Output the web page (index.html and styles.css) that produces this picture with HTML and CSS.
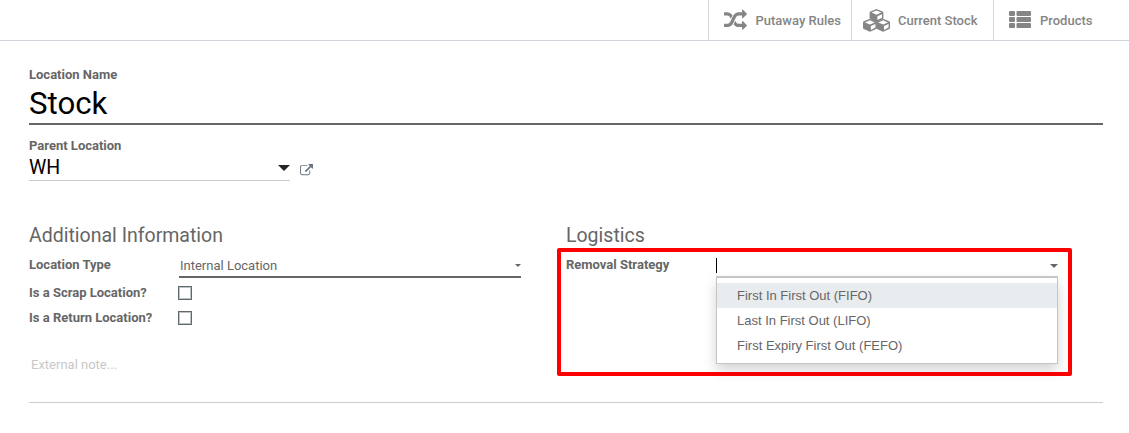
FILE: index.html
```html
<!DOCTYPE html>
<html lang="en">
<head>
<meta charset="utf-8">
<title>Stock location</title>
<link rel="stylesheet" href="styles.css">
</head>
<body>
<nav class="stat-bar">
  <a class="stat stat-putaway">
    <svg class="icon-random" viewBox="0 0 1792 1792"><path d="M666 481q-60 92-137 273-22-45-37-72.500t-40.500-63.500-51-56.500-63-35-81.500-14.500h-224q-14 0-23-9t-9-23v-192q0-14 9-23t23-9h224q250 0 410 225zm1126 799q0 14-9 23l-320 320q-9 9-23 9-13 0-22.500-9.500t-9.500-22.500v-192q-32 0-85 .5t-81 1-73-1-71-5-64-10.500-63-18.500-58-28.500-59-40-55-53.500-56-69.500q59-93 136-273 22 45 37 72.500t40.500 63.500 51 56.500 63 35 81.500 14.500h256v-192q0-14 9-23t23-9q12 0 24 10l319 319q9 9 9 23zm0-896q0 14-9 23l-320 320q-9 9-23 9-13 0-22.500-9.500t-9.500-22.500v-192h-256q-48 0-87 15t-69 45-51 61.500-45 77.500q-32 62-78 171-29 66-49.500 111t-54 105-64 100-74 83-90 68.500-106.500 42-128 16.500h-224q-14 0-23-9t-9-23v-192q0-14 9-23t23-9h224q48 0 87-15t69-45 51-61.500 45-77.500q32-62 78-171 29-66 49.500-111t54-105 64-100 74-83 90-68.500 106.500-42 128-16.500h256v-192q0-14 9-23t23-9q12 0 24 10l319 319q9 9 9 23z"/></svg>
    <span>Putaway Rules</span>
  </a>
  <a class="stat stat-stock">
    <svg class="icon-cubes" viewBox="0 0 27 23">
      <defs>
        <g id="cube">
          <path d="M-.6-6.100Q0-6.300.6-6.100L6.100-3.800Q6.900-3.400 6.900-2.600V2.600Q6.900 3.400 6.200 3.800L.7 6.500Q0 6.800-.7 6.500L-6.200 3.800Q-6.900 3.400-6.900 2.600V-2.600Q-6.900-3.400-6.100-3.800Z"/>
          <path class="cube-face" d="M0-4.800 4.900-2.700 0-.6-4.900-2.700ZM.9.900 5.500-1.100V2.500L.9 4.800Z"/>
        </g>
      </defs>
      <use href="#cube" x="13.500" y="6.300"/>
      <use href="#cube" x="6.900" y="16.100"/>
      <use href="#cube" x="20.100" y="16.100"/>
    </svg>
    <span>Current Stock</span>
  </a>
  <a class="stat stat-products">
    <svg class="icon-list" viewBox="0 0 22 17"><rect width="6" height="5" rx="1.100"/><rect x="7.500" width="14.500" height="5" rx="1.100"/><rect y="6" width="6" height="5" rx="1.100"/><rect x="7.500" y="6" width="14.500" height="5" rx="1.100"/><rect y="12" width="6" height="5" rx="1.100"/><rect x="7.500" y="12" width="14.500" height="5" rx="1.100"/></svg>
    <span>Products</span>
  </a>
</nav>
<main class="sheet">
  <div class="label">Location Name</div>
  <div class="name-field">Stock</div>
  <div class="label parent-label">Parent Location</div>
  <div class="parent-row">
    <div class="parent-field"><span>WH</span><svg class="caret-large" viewBox="0 0 12 6"><path d="M0 0H12L6 6Z"/></svg></div>
    <svg class="icon-external" viewBox="0 0 1792 1792"><path d="M1408 928v320q0 119-84.500 203.500t-203.500 84.500h-832q-119 0-203.500-84.500t-84.500-203.500v-832q0-119 84.500-203.500t203.500-84.500h704q14 0 23 9t9 23v64q0 14-9 23t-23 9h-704q-66 0-113 47t-47 113v832q0 66 47 113t113 47h832q66 0 113-47t47-113v-320q0-14 9-23t23-9h64q14 0 23 9t9 23zm384-864v512q0 26-19 45t-45 19-45-19l-176-176-652 652q-10 10-23 10t-23-10l-114-114q-10-10-10-23t10-23l652-652-176-176q-19-19-19-45t19-45 45-19h512q26 0 45 19t19 45z"/></svg>
  </div>
  <div class="groups">
    <section class="group">
      <h2>Additional Information</h2>
      <div class="row row-type"><span class="label">Location Type</span><div class="select"><span>Internal Location</span><svg class="caret-small" viewBox="0 0 6 3"><path d="M0 0H6L3 3Z"/></svg></div></div>
      <div class="row"><span class="label">Is a Scrap Location?</span><span class="checkbox"></span></div>
      <div class="row"><span class="label">Is a Return Location?</span><span class="checkbox"></span></div>
    </section>
    <section class="group">
      <h2>Logistics</h2>
      <div class="row row-type"><span class="label">Removal Strategy</span>
        <div class="combo"><span class="cursor"></span><svg class="caret-medium" viewBox="0 0 8 4"><path d="M0 0H8L4 4Z"/></svg>
          <ul class="menu"><li class="active">First In First Out (FIFO)</li><li>Last In First Out (LIFO)</li><li>First Expiry First Out (FEFO)</li></ul>
        </div>
      </div>
      <div class="highlight"></div>
    </section>
  </div>
  <div class="note">External note...</div>
</main>
</body>
</html>
```
FILE: styles.css
```css
* { box-sizing: border-box; }
body { margin: 0; background: #fff; color: #666; font: 13px/20px Roboto, sans-serif; }
svg { display: block; flex: none; fill: currentColor; }
.stat-bar { display: flex; justify-content: flex-end; height: 41px; border-bottom: 1px solid #ced4da; }
.stat { display: flex; align-items: center; border-left: 1px solid #d5d8dd; color: #858585; font-weight: 500; white-space: nowrap; }
.stat span { padding-top: 1px; }
.stat-putaway { width: 143px; padding-left: 15px; gap: 8.5px; }
.stat-stock { width: 142px; padding-left: 11px; gap: 8px; }
.stat-products { width: 136px; padding-left: 15px; gap: 9px; }
.icon-random { width: 23px; height: 23px; }
.icon-cubes { width: 27px; height: 23px; }
.icon-list { width: 22px; height: 17px; margin-top: -1px; }
.cube-face { fill: #fff; }
.sheet { padding: 24px 26px 0 29px; }
.label { font-weight: 700; }
.name-field { height: 40px; border-bottom: 2px solid #666; color: #000; font-size: 31.2px; line-height: 37px; }
.parent-label { margin-top: 11px; }
.parent-row { display: flex; gap: 10px; }
.parent-field { display: flex; justify-content: space-between; align-items: center; width: 261px; height: 25px; border-bottom: 1px solid #ccc; color: #000; font-size: 19.5px; line-height: 24px; }
.caret-large { width: 12px; height: 6px; color: #212529; }
.icon-external { width: 13px; height: 13px; margin-top: 8px; color: #6c757d; }
.groups { display: grid; grid-template-columns: 537px 537px; height: 171px; margin-top: 42px; }
.group { position: relative; }
h2 { margin: 0 0 7px; font-size: 19.5px; font-weight: 400; line-height: 25px; }
.row { display: flex; height: 25px; }
.row > .label { width: 150px; }
.row-type { height: 28px; }
.select { display: flex; justify-content: space-between; align-items: center; width: 342px; height: 23px; padding-left: 1px; border-bottom: 2px solid #666; }
.caret-small { width: 6px; height: 3px; }
.checkbox { width: 14px; height: 14px; margin: 3px 0 0 -1px; border: 1px solid #62696b; box-shadow: inset 0 0 0 1px #b9c3c5; }
.combo { position: relative; display: flex; justify-content: space-between; width: 342px; height: 23px; border-bottom: 2px solid #ccc; }
.cursor { width: 1px; height: 15px; margin-top: 3px; background: #000; }
.caret-medium { width: 8px; height: 4px; margin-top: 9px; }
.menu { position: absolute; z-index: 1; top: 22px; left: 0; width: 342px; height: 87px; margin: 0; padding: 5px 0; border: 1px solid #c5c5c5; background: #fff; box-shadow: 0 6px 12px rgba(0,0,0,.175); list-style: none; font-family: "Liberation Sans", Arial, sans-serif; }
.menu li { height: 25px; padding-left: 20px; line-height: 25px; }
.menu .active { background: #e9ecef; }
.highlight { position: absolute; top: 25px; left: -9px; width: 515px; height: 128px; border: 4px solid #f00; border-radius: 2px; }
.note { height: 48px; margin-top: -39px; padding-left: 2px; border-bottom: 1px solid #ccc; color: #c8c8c8; }
```
